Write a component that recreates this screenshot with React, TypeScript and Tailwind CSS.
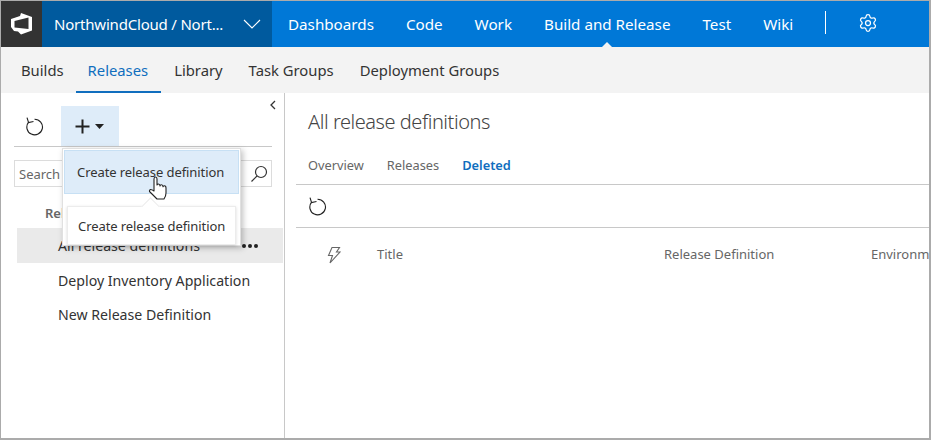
import React from "react";
import { Settings } from "lucide-react";

const font = { fontFamily: '"Noto Sans", sans-serif' };

function Refresh() {
  return (
    <svg width="19" height="19" viewBox="0 0 17 17" fill="none" stroke="#222" strokeWidth="1">
      <path d="M3.2 4.6 A7 7 0 1 0 8.5 2" />
      <path d="M1.8 0.6 L3.2 5 L7.6 4" />
    </svg>
  );
}

export default function App() {
  return (
    <div className="relative w-[931px] h-[440px] overflow-hidden bg-white border-t border-l border-r-2 border-b-2 border-[#ababab] text-[#333]" style={font}>
      <header className="flex h-[46px] bg-[#0078d7] text-white text-[15.2px]">
        <div className="flex items-center justify-center w-[41px] bg-[#333333]">
          <svg width="24" height="24" viewBox="0 0 24 24" fill="white">
            <path fillRule="evenodd" d="M1 7 L10 4 L11 1 L22 5 L22 18.5 L11 22.5 L8 19.5 L4 19 L1 15 Z M4.5 9 L4.5 15.5 L18.5 17 L18.5 5.5 Z" />
          </svg>
        </div>
        <div className="flex items-center w-[230px] bg-[#005a9e] pl-3">
          <span className="text-[15px] tracking-[-0.2px]">NorthwindCloud / Nort...</span>
          <svg className="ml-auto mr-[11px]" width="18" height="10" viewBox="0 0 18 10" fill="none" stroke="white" strokeWidth="1.1">
            <path d="M1 1 L9 9 L17 1" />
          </svg>
        </div>
        <nav className="flex items-center pl-[16px] gap-[32px]">
          <span>Dashboards</span>
          <span>Code</span>
          <span>Work</span>
          <span className="relative self-stretch flex items-center">
            Build and Release
            <span className="absolute left-1/2 bottom-0 -ml-[5px] w-0 h-0 border-l-[5px] border-r-[5px] border-b-[5px] border-l-transparent border-r-transparent border-b-[#f3f3f3]" />
          </span>
          <span>Test</span>
          <span>Wiki</span>
          <span className="w-px h-[23px] bg-white -mt-[3px]" />
          <Settings className="-mt-[2px]" size={20} strokeWidth={1.5} color="white" />
        </nav>
      </header>

      <div className="flex h-[46px] bg-[#f3f3f3] text-[14.8px] pl-[8px]">
        <span className="flex items-center pt-[2px] pl-[12px] pr-[12px] border-b-2 border-transparent">Builds</span>
        <span className="flex items-center pt-[2px] pl-[12px] pr-[13px] text-[#106ebe] border-b-2 border-[#106ebe]">Releases</span>
        <span className="flex items-center pt-[2px] px-[13px] border-b-2 border-transparent">Library</span>
        <span className="flex items-center pt-[2px] px-[13px] border-b-2 border-transparent">Task Groups</span>
        <span className="flex items-center pt-[2px] px-[13px] border-b-2 border-transparent">Deployment Groups</span>
      </div>

      <div className="flex h-[345px]">
        <aside className="relative w-[284px] shrink-0 border-r border-[#c8c8c8] text-[14.15px]">
          <svg className="absolute right-[8px] top-[7px]" width="6" height="10" viewBox="0 0 6 10" fill="none" stroke="#333" strokeWidth="1.3">
            <path d="M5 1 L1 5 L5 9" />
          </svg>
          <div className="ml-[13px] mr-[12px] mt-[13px] flex h-[41px] items-stretch border-b border-[#c8c8c8]">
            <span className="flex w-[47px] items-center pl-[11px]"><Refresh /></span>
            <span className="flex w-[58px] items-center justify-center gap-[5px] bg-[#deecf9] pr-[2px]">
              <svg width="15" height="15" viewBox="0 0 15 15" fill="#222">
                <path d="M6.5 0.5 h2 v6 h6 v2 h-6 v6 h-2 v-6 h-6 v-2 h6 Z" />
              </svg>
              <svg width="9" height="5" viewBox="0 0 9 5" fill="#222"><path d="M0 0 H9 L4.5 5 Z" /></svg>
            </span>
          </div>
          <div className="ml-[13px] mr-[12px] mt-[13px] flex h-[27px] items-center justify-between border border-[#dcdcdc] pl-[4px] pr-[2px] text-[13px] text-[#666]">
            <span className="pt-[3px]">Search</span>
            <svg width="20" height="20" viewBox="0 0 20 20" fill="none" stroke="#333" strokeWidth="1.2">
              <circle cx="12" cy="8" r="5.5" />
              <path d="M8 12 L2.5 17.5" />
            </svg>
          </div>
          <div className="pl-[44px] pt-[17px] h-[41px] text-[13px] font-semibold text-[#666]">Release definitions</div>
          <div className="ml-[16px] mr-[1px] flex h-[35px] items-center justify-between bg-[#eaeaea] pl-[41px] pr-[25px]">
            <span>All release definitions</span>
            <span className="flex gap-[2px]">
              <i className="size-[4px] rounded-full bg-[#222]" />
              <i className="size-[4px] rounded-full bg-[#222]" />
              <i className="size-[4px] rounded-full bg-[#222]" />
            </span>
          </div>
          <div className="pl-[57px] pt-[2px] flex h-[34px] items-center">Deploy Inventory Application</div>
          <div className="pl-[57px] pt-[2px] flex h-[34px] items-center">New Release Definition</div>
        </aside>

        <main className="flex-1 min-w-0 overflow-hidden pl-[11px]">
          <h1 className="pl-[12px] pt-[14px] h-[56px] text-[20px] tracking-[-0.45px] font-light text-[#444]">All release definitions</h1>
          <div className="flex h-[36px] items-start gap-[23px] pl-[12px] pt-[7px] text-[12.8px] text-[#666] border-b border-[#c8c8c8]">
            <span>Overview</span>
            <span>Releases</span>
            <span className="font-semibold text-[#106ebe]">Deleted</span>
          </div>
          <div className="flex h-[43px] items-center pl-[12px] border-b border-[#c8c8c8]"><Refresh /></div>
          <div className="flex h-[53px] items-center text-[13px] text-[#666] whitespace-nowrap">
            <svg className="ml-[31px] shrink-0" width="14" height="18" viewBox="0 0 14 18" fill="none" stroke="#666" strokeWidth="1.1">
              <path d="M5 1.5 H12.5 L9.5 6 H13 L3 17 L5.5 9.5 H1.5 Z" />
            </svg>
            <span className="ml-[36px] w-[287px] shrink-0">Title</span>
            <span className="w-[207px] shrink-0">Release Definition</span>
            <span className="shrink-0">Environments</span>
          </div>
        </main>
      </div>

      <div className="absolute left-[61px] top-[147px] h-[98px] w-[179px] bg-white border border-[#e0e0e0] shadow-[2px_2px_6px_rgba(0,0,0,0.25)] p-px text-[13px] tracking-[-0.08px]">
        <div className="flex h-[44px] items-center border border-[#c7e0f4] bg-[#deecf9] pl-[12px] pt-[2px]">Create release definition</div>
      </div>
      <div className="absolute left-[66px] top-[205px] flex h-[39px] w-[169px] items-center bg-white border border-[#ececec] pl-[10px] pt-[2px] text-[13px] tracking-[-0.08px] shadow-[0_1px_3px_rgba(0,0,0,0.15)]">
        Create release definition
        <span className="absolute left-[76px] -top-[7px] size-[13px] rotate-45 bg-white border-l border-t border-[#ececec]" />
      </div>
      <svg className="absolute left-[147px] top-[175px]" width="20" height="26" viewBox="0 0 20 26" fill="white" stroke="#222" strokeWidth="1.1" strokeLinejoin="round">
        <path d="M6 15 V3 Q6 1 7.5 1 Q9 1 9 3 V9 Q9 8 10.5 8 Q12 8 12 10 Q12 8.7 13.4 8.7 Q15 8.7 15 10.7 Q15 9.7 16.4 9.7 Q18 9.7 18 12 V17 Q18 20 16 23 H9 Q7 21 4 18 L1.5 15.5 Q1 14 2.5 13.5 Q4 13.5 6 15 Z" />
      </svg>
    </div>
  );
}
